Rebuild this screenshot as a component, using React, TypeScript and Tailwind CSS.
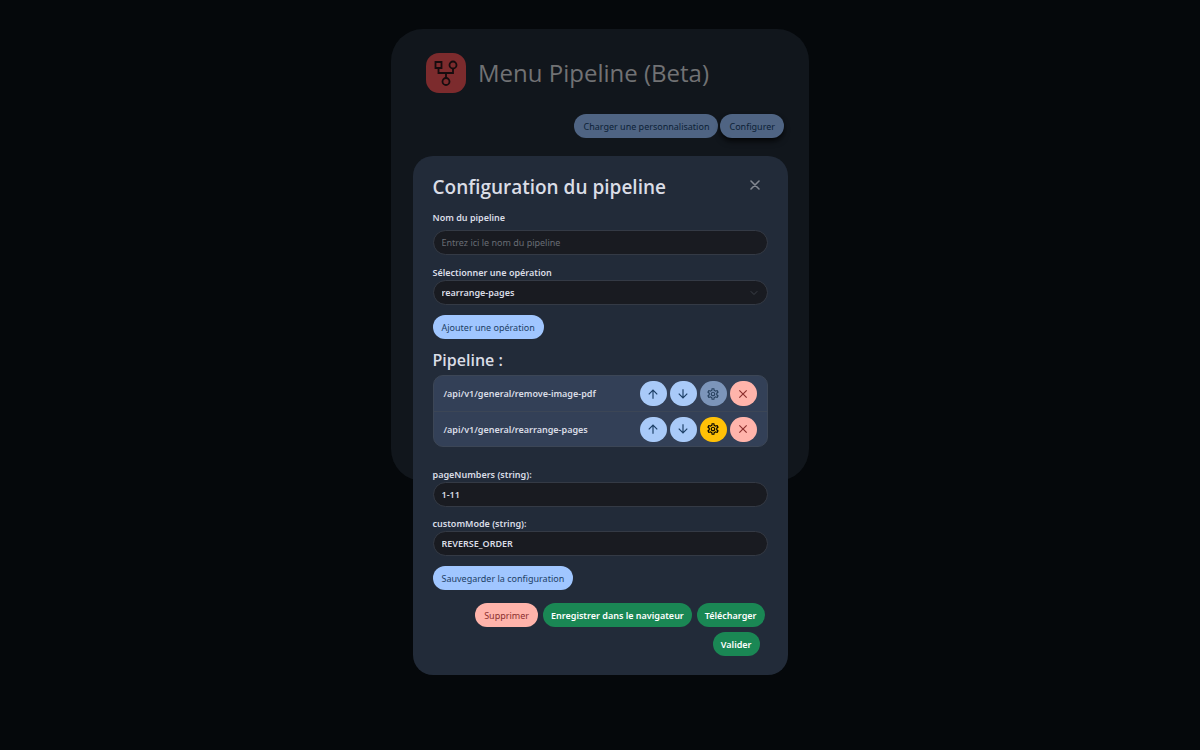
import { useState } from "react"
import { MdArrowDownward, MdArrowUpward, MdClose, MdOutlineSettings } from "react-icons/md"

const pipeline = [
  { path: '/api/v1/general/remove-image-pdf', configurable: false },
  { path: '/api/v1/general/rearrange-pages', configurable: true },
]

const operations = ['rearrange-pages', 'remove-image-pdf']

export default function App() {

  const [name, setName] = useState('')
  const [operation, setOperation] = useState('rearrange-pages')
  const [pageNumbers, setPageNumbers] = useState('1-11')
  const [customMode, setCustomMode] = useState('REVERSE_ORDER')

  return (
    <div className="relative min-h-screen px-4 pt-[29px] bg-[#05080b] text-[9px] leading-[15px] font-['Noto_Sans',sans-serif]">
      <main className="mx-auto max-w-[418px] h-[452px] px-[25px] pt-6 bg-[#11161c] rounded-[32px]">
        <div className="pl-[10px] flex items-center gap-3">
          <PipelineLogo />
          <h1 className="text-2xl leading-10 text-[#717274] font-['Open_Sans',sans-serif]">Menu Pipeline (Beta)</h1>
        </div>
        <div className="mt-[21px] flex justify-end gap-[2px]">
          <Button className="px-[9px] bg-[#4f6483] text-[#0c1f36]">Charger une personnalisation</Button>
          <Button className="px-[9px] bg-[#4f6483] text-[#0c1f36] shadow-md shadow-black/70">Configurer</Button>
        </div>
      </main>

      <div className="absolute inset-x-0 top-[156px] px-4 pb-4">
        <section role="dialog" aria-labelledby="dialog-title" className="mx-auto max-w-[375px] px-5 pt-4 pb-[19px] bg-[#222b39] text-[#dadde6] rounded-[20px]">
          <div className="flex items-start justify-between">
            <h2 id="dialog-title" className="text-[19px] leading-[30px] font-semibold font-['Open_Sans',sans-serif]">Configuration du pipeline</h2>
            <button aria-label="Fermer" className="p-2">
              <svg className="w-[10px] h-[10px]" viewBox="0 0 10 10" stroke="#838891" strokeWidth="1.6" strokeLinecap="round"><path d="M1 1l8 8M9 1l-8 8" /></svg>
            </button>
          </div>

          <label htmlFor="name" className="mt-2 block font-semibold">Nom du pipeline</label>
          <input id="name" className="mt-[5px] w-full h-[25px] px-2 block bg-[#191b21] border border-[#343a45] rounded-full placeholder:text-[#686c74]" placeholder="Entrez ici le nom du pipeline" value={name} onChange={e => setName(e.target.value)} />

          <label htmlFor="operation" className="mt-[10px] block font-semibold">Sélectionner une opération</label>
          <div className="relative">
            <select id="operation" className="w-full h-[25px] px-2 block appearance-none bg-[#191b21] border border-[#343a45] rounded-full font-semibold" value={operation} onChange={e => setOperation(e.target.value)}>
              {operations.map(item => <option key={item}>{item}</option>)}
            </select>
            <svg className="w-2 h-2 absolute right-[10px] top-[9px] pointer-events-none" viewBox="0 0 16 16" fill="none" stroke="#3c4048" strokeWidth="2" strokeLinecap="round" strokeLinejoin="round"><path d="m2 5 6 6 6-6" /></svg>
          </div>

          <Button className="mt-[10px] px-[9px] bg-[#a0c6ff] text-[#1d3f66]">Ajouter une opération</Button>

          <h3 className="mt-2 mb-[2px] text-base leading-[26px] font-semibold font-['Open_Sans',sans-serif]">Pipeline :</h3>
          <ol className="bg-[#334057] border border-[#3c4656] rounded-[10px]">
            {pipeline.map(item => (
              <li key={item.path} className="h-[35px] px-[10px] flex items-center justify-between not-first:border-t border-[#3c4656]">
                <span className="font-semibold">{item.path}</span>
                <span className="flex gap-[3px]">
                  <IconButton label="Monter" className="bg-[#a9caf8] text-[#1d3f66]"><MdArrowUpward /></IconButton>
                  <IconButton label="Descendre" className="bg-[#a9caf8] text-[#1d3f66]"><MdArrowDownward /></IconButton>
                  <IconButton label="Configurer" disabled={!item.configurable} className={item.configurable ? 'bg-[#ffc107] text-black' : 'bg-[#7c95ba] text-[#27415f]'}><MdOutlineSettings /></IconButton>
                  <IconButton label="Retirer" className="bg-[#ffb4ab] text-[#8c2f2d]"><MdClose /></IconButton>
                </span>
              </li>
            ))}
          </ol>

          <label htmlFor="pageNumbers" className="mt-5 block font-semibold">pageNumbers (string):</label>
          <TextInput id="pageNumbers" value={pageNumbers} onChange={e => setPageNumbers(e.target.value)} />
          <label htmlFor="customMode" className="mt-[9px] block font-semibold">customMode (string):</label>
          <TextInput id="customMode" value={customMode} onChange={e => setCustomMode(e.target.value)} />

          <Button className="mt-[10px] px-[9px] bg-[#a0c6ff] text-[#1d3f66]">Sauvegarder la configuration</Button>

          <div className="mt-[13px] pr-[3px] flex justify-end gap-[5px]">
            <Button className="px-[9px] bg-[#ffb4ab] text-[#8c2f2d]">Supprimer</Button>
            <Button className="px-2 bg-[#1a8754] text-white font-semibold">Enregistrer dans le navigateur</Button>
            <Button className="px-2 bg-[#1a8754] text-white font-semibold">Télécharger</Button>
          </div>
          <div className="mt-[5px] pr-2 flex justify-end">
            <Button className="px-2 bg-[#1a8754] text-white font-semibold">Valider</Button>
          </div>
        </section>
      </div>
    </div>
  )
}

function Button({ className = '', ...rest }: React.ButtonHTMLAttributes<HTMLButtonElement>) {
  return <button className={`h-6 block rounded-full whitespace-nowrap ${className}`} {...rest} />
}

interface IconButtonType extends React.ButtonHTMLAttributes<HTMLButtonElement> {
  label: string
}

function IconButton({ label, className = '', ...rest }: IconButtonType) {
  return <button aria-label={label} className={`w-[27px] h-[25px] flex justify-center items-center text-sm rounded-full ${className}`} {...rest} />
}

function TextInput(props: React.InputHTMLAttributes<HTMLInputElement>) {
  return <input className="w-full h-[25px] px-2 block bg-[#191b21] border border-[#343a45] rounded-full font-semibold" {...props} />
}

function PipelineLogo() {
  return (
    <svg className="w-10 h-10" viewBox="0 0 40 40" fill="none" stroke="#160c0e" strokeWidth="1.8">
      <rect width="40" height="40" rx="13" fill="#7c2b2d" stroke="none" />
      <path d="M9.5 9h6v6h-6zM12.5 15v5H27v-5M20 20v5" />
      <circle cx="27" cy="12" r="3.5" />
      <circle cx="20" cy="28.5" r="3.5" />
    </svg>
  )
}
